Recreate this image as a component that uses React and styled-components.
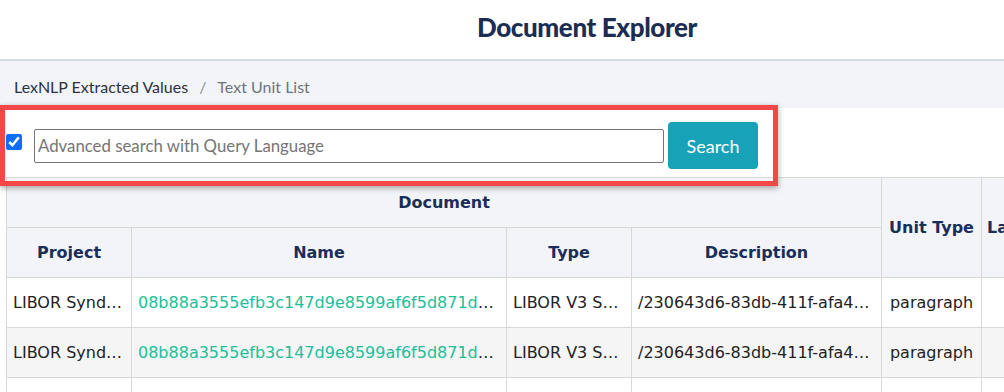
import React from 'react';
import styled, { createGlobalStyle } from 'styled-components';

const GlobalStyle = createGlobalStyle`
  html, body {
    margin: 0;
    padding: 0;
    background: #ffffff;
  }
  body {
    font-family: Lato, "Open Sans", sans-serif;
    overflow: hidden;
  }
`;

const rows = [
  {
    project: 'LIBOR Syndicated Facility Agreement',
    name: '08b88a3555efb3c147d9e8599af6f5d871d4ba2c.pdf',
    type: 'LIBOR V3 Syndicated Loan',
    description: '/230643d6-83db-411f-afa4-0c6e1d7b0a11.pdf',
    unitType: 'paragraph',
  },
  {
    project: 'LIBOR Syndicated Facility Agreement',
    name: '08b88a3555efb3c147d9e8599af6f5d871d4ba2c.pdf',
    type: 'LIBOR V3 Syndicated Loan',
    description: '/230643d6-83db-411f-afa4-0c6e1d7b0a11.pdf',
    unitType: 'paragraph',
  },
  {
    project: '',
    name: '',
    type: '',
    description: '',
    unitType: '',
  },
];

const App = () => {
  return (
    <>
      <GlobalStyle />
      <Page>
        <Header>
          <Title>Document Explorer</Title>
        </Header>
        <Breadcrumbs>
          <Crumb>LexNLP Extracted Values</Crumb>
          <Divider>/</Divider>
          <Crumb $current>Text Unit List</Crumb>
        </Breadcrumbs>
        <SearchBar>
          <Check type='checkbox' defaultChecked />
          <SearchInput placeholder='Advanced search with Query Language' />
          <SearchButton>Search</SearchButton>
        </SearchBar>
        <TableWrap>
          <Table>
            <colgroup>
              <col style={{ width: 125 }} />
              <col style={{ width: 375 }} />
              <col style={{ width: 125 }} />
              <col style={{ width: 250 }} />
              <col style={{ width: 100 }} />
              <col style={{ width: 120 }} />
            </colgroup>
            <thead>
              <tr>
                <Th colSpan={4}>Document</Th>
                <Th rowSpan={2}>Unit Type</Th>
                <Th rowSpan={2} $left>Language</Th>
              </tr>
              <tr>
                <Th>Project</Th>
                <Th>Name</Th>
                <Th>Type</Th>
                <Th>Description</Th>
              </tr>
            </thead>
            <tbody>
              {rows.map((r, i) => (
                <Row key={i} $striped={i % 2 === 1}>
                  <Td>{r.project}</Td>
                  <Td>
                    <DocLink>{r.name}</DocLink>
                  </Td>
                  <Td>{r.type}</Td>
                  <Td>{r.description}</Td>
                  <Td $center>{r.unitType}</Td>
                  <Td />
                </Row>
              ))}
            </tbody>
          </Table>
        </TableWrap>
        <Highlight />
      </Page>
    </>
  );
};

export default App;

const Page = styled.div`
  position: relative;
  width: 1004px;
  height: 392px;
  overflow: hidden;
`;

const Header = styled.header`
  height: 61px;
  box-sizing: border-box;
  background: #ffffff;
  border-bottom: 2px solid #d6dae3;
  display: flex;
  align-items: center;
  justify-content: center;
  padding: 0 0 6px 170px;
`;

const Title = styled.h1`
  margin: 0;
  font-family: Lato, sans-serif;
  font-weight: 900;
  font-size: 26px;
  color: #1b2d52;
  letter-spacing: -0.4px;
`;

const Breadcrumbs = styled.nav`
  height: 47px;
  box-sizing: border-box;
  background: #f3f4f8;
  display: flex;
  align-items: center;
  padding: 3px 0 0 14px;
  font-size: 16px;
`;

const Crumb = styled.span`
  color: ${(p) => (p.$current ? '#6c757d' : '#2a3340')};
`;

const Divider = styled.span`
  color: #8a9099;
  margin: 0 11px;
`;

const SearchBar = styled.div`
  height: 69px;
  box-sizing: border-box;
  padding: 6px 0 0 6px;
  display: flex;
  align-items: center;
  background: #ffffff;
`;

const Check = styled.input`
  width: 16px;
  height: 16px;
  margin: 0 12px 7px 0;
  accent-color: #0d6efd;
`;

const SearchInput = styled.input`
  width: 630px;
  height: 34px;
  box-sizing: border-box;
  border: 1px solid #767676;
  border-radius: 2px;
  padding: 0 3px;
  font-family: Lato, sans-serif;
  font-size: 16.8px;
  color: #333;
  outline: none;

  &::placeholder {
    color: #757575;
  }
`;

const SearchButton = styled.button`
  width: 90px;
  height: 47px;
  margin-left: 4px;
  border: none;
  border-radius: 4px;
  background: #18a2b8;
  color: #ffffff;
  font-family: Lato, sans-serif;
  font-size: 18px;
  cursor: pointer;
`;

const TableWrap = styled.div`
  padding-left: 6px;
`;

const Table = styled.table`
  border-collapse: collapse;
  table-layout: fixed;
  width: 1096px;
  font-family: "DejaVu Sans", Verdana, sans-serif;
  font-size: 16px;
`;

const Th = styled.th`
  height: 49px;
  background: #f3f4f8;
  border: 1px solid #d8d8d8;
  color: #1b2d5a;
  font-weight: 700;
  text-align: ${(p) => (p.$left ? 'left' : 'center')};
  padding: 0 5px;
  white-space: nowrap;
  overflow: hidden;
`;

const Row = styled.tr`
  background: ${(p) => (p.$striped ? '#f5f5f5' : '#ffffff')};
`;

const Td = styled.td`
  height: 49px;
  border: 1px solid #d8d8d8;
  padding: 0 6px;
  color: #222222;
  text-align: ${(p) => (p.$center ? 'center' : 'left')};
  white-space: nowrap;
  overflow: hidden;
  text-overflow: ellipsis;
`;

const DocLink = styled.span`
  color: #20bf99;
`;

const Highlight = styled.div`
  position: absolute;
  left: 0;
  top: 105px;
  width: 778px;
  height: 81px;
  box-sizing: border-box;
  border: 5px solid #f44747;
  box-shadow: 0 2px 6px rgba(0, 0, 0, 0.35);
  pointer-events: none;
`;
